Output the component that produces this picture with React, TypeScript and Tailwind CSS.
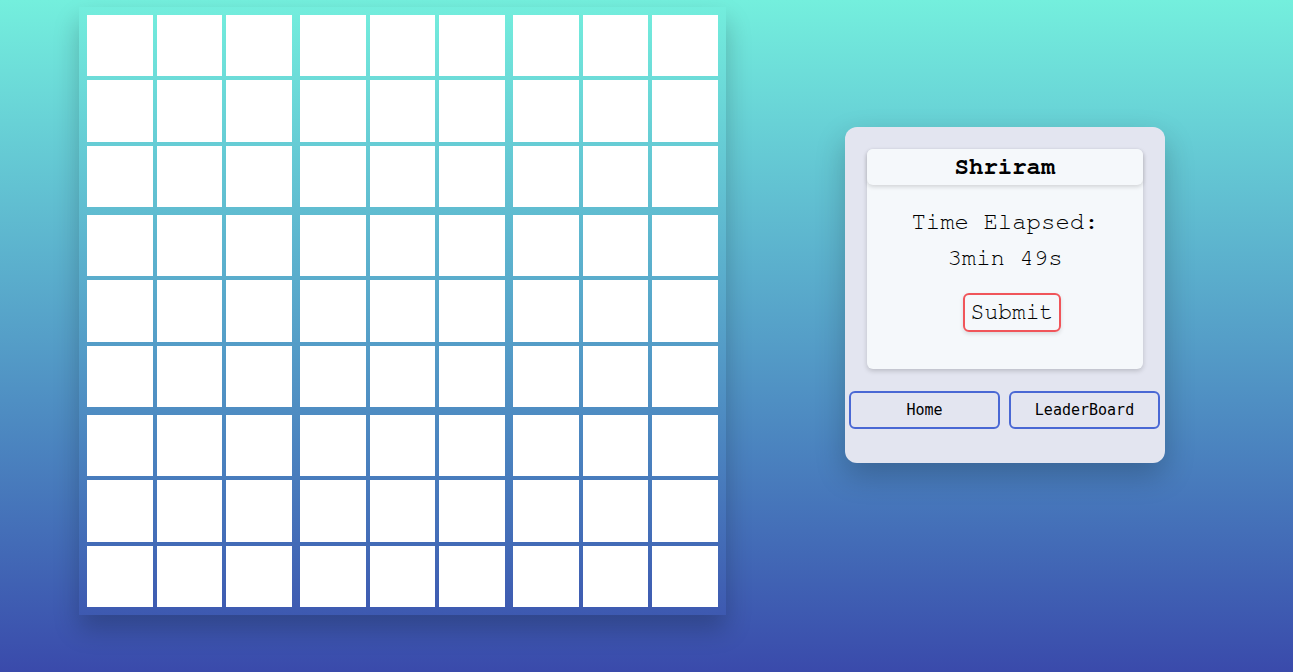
import React from "react"

const blocks = Array.from({ length: 9 })
const cells = Array.from({ length: 9 })

const Board = () => {
  return (
    <div className="grid w-[647px] grid-cols-3 gap-2 p-2 shadow-[0_14px_24px_rgba(0,0,0,0.22)]">
      {blocks.map((_, b) => (
        <div key={b} className="grid h-[192px] grid-cols-3 grid-rows-3 gap-1">
          {cells.map((_, c) => (
            <div key={c} className="bg-white" />
          ))}
        </div>
      ))}
    </div>
  )
}

const Panel = () => {
  return (
    <div className="mt-[120px] ml-[119px] w-[320px] rounded-xl bg-[#e3e5f0] px-1 pt-[22px] pb-[34px] shadow-[0_12px_30px_rgba(0,0,0,0.22)]">
      <div className="mx-[18px] rounded-md bg-[#f5f8fb] pb-[37px] shadow-[0_2px_5px_rgba(0,0,0,0.18)]">
        <div className="flex h-9 items-center justify-center rounded-md bg-[#f5f8fb] shadow-[0_2px_4px_rgba(0,0,0,0.14)]">
          <h1 className="font-['FreeMono','Nimbus_Mono_PS',monospace] text-[24px] font-bold text-black">
            Shriram
          </h1>
        </div>
        <div className="mt-[19px] flex flex-col items-center font-['FreeMono','Nimbus_Mono_PS',monospace] text-[24px] leading-9 text-black">
          <p>Time Elapsed:</p>
          <p>3min 49s</p>
          <button className="mt-[17px] ml-[14px] h-[39px] w-[98px] rounded-md border-2 border-[#f0555a] text-[23px] leading-none text-black shadow-[0_2px_4px_rgba(0,0,0,0.12)]">
            Submit
          </button>
        </div>
      </div>
      <div className="mt-[22px] flex gap-[9px]">
        <button className="h-[38px] w-[151px] rounded-md border-2 border-[#4a68d4] font-['DejaVu_Sans_Mono',monospace] text-[15px] text-black">
          Home
        </button>
        <button className="h-[38px] w-[151px] rounded-md border-2 border-[#4a68d4] font-['DejaVu_Sans_Mono',monospace] text-[15px] text-black">
          LeaderBoard
        </button>
      </div>
    </div>
  )
}

export default function App() {
  return (
    <div className="flex h-[672px] w-full items-start bg-gradient-to-b from-[#74efdd] via-[#559fc8] to-[#3a4aab] pt-[7px] pl-[79px]">
      <Board />
      <Panel />
    </div>
  )
}
